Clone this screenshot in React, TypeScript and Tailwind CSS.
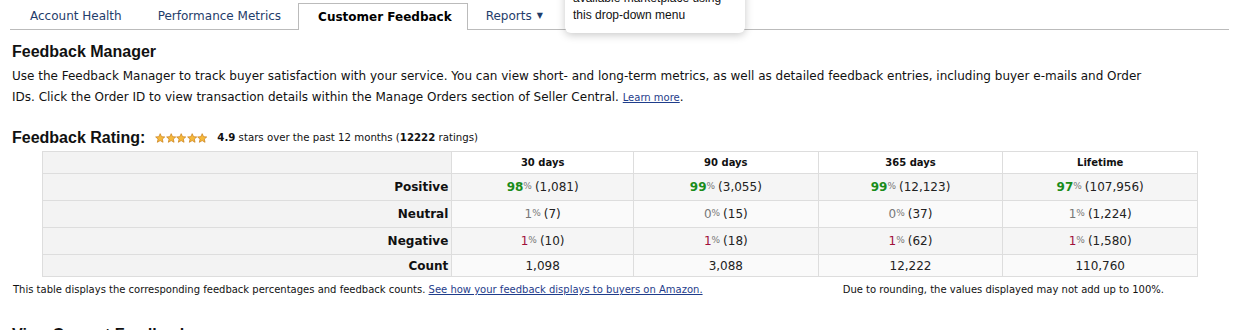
import React from 'react'

const verdana = { fontFamily: '"DejaVu Sans", Verdana, sans-serif' }
const arial = { fontFamily: '"Liberation Sans", Arial, sans-serif' }

function Star() {
  return (
    <svg width="10.4" height="10.4" viewBox="0 0 24 24">
      <path
        d="M12 1.5l3.1 6.9 7.4.7-5.6 5 1.7 7.4L12 17.6l-6.6 3.9 1.7-7.4-5.6-5 7.4-.7z"
        fill="#f6b93b"
        stroke="#c77a12"
        strokeWidth="1.6"
        strokeLinejoin="round"
      />
    </svg>
  )
}

type Cell = { pct: string; n: string }

const cols = ['30 days', '90 days', '365 days', 'Lifetime']
const widths = ['w-[182px]', 'w-[185px]', 'w-[185px]', 'w-[195px]']

const positive: Cell[] = [
  { pct: '98', n: '(1,081)' },
  { pct: '99', n: '(3,055)' },
  { pct: '99', n: '(12,123)' },
  { pct: '97', n: '(107,956)' },
]
const neutral: Cell[] = [
  { pct: '1', n: '(7)' },
  { pct: '0', n: '(15)' },
  { pct: '0', n: '(37)' },
  { pct: '1', n: '(1,224)' },
]
const negative: Cell[] = [
  { pct: '1', n: '(10)' },
  { pct: '1', n: '(18)' },
  { pct: '1', n: '(62)' },
  { pct: '1', n: '(1,580)' },
]
const counts = ['1,098', '3,088', '12,222', '110,760']

function Row({
  label,
  cells,
  pctClass,
  bg,
}: {
  label: string
  cells: Cell[]
  pctClass: string
  bg: string
}) {
  return (
    <div className="flex h-[27px] border-t border-[#dddddd]">
      <div className="w-[409px] bg-[#f3f3f3] flex items-center justify-end pr-[3px] font-bold text-[12px] text-[#111]">
        {label}
      </div>
      {cells.map((c, i) => (
        <div
          key={i}
          className={`${widths[i]} ${bg} border-l border-[#dddddd] flex items-center justify-center text-[12px] text-[#222]`}
        >
          <span className={pctClass}>{c.pct}</span>
          <span className="text-[9px] text-[#777] mr-[3px]">%</span>
          <span>{c.n}</span>
        </div>
      ))}
    </div>
  )
}

export default function App() {
  return (
    <div className="relative w-[1239px] h-[330px] overflow-hidden bg-white text-[#111]" style={verdana}>
      {/* tab bar */}
      <div className="flex items-end h-[30px] mx-[10px] border-b border-[#bbbbbb] text-[12px]">
        <div className="pl-[20px] pr-[18px] h-[26px] flex items-center text-[#1f3d6b]">Account Health</div>
        <div className="pl-[18px] pr-[17px] h-[26px] flex items-center text-[#1f3d6b]">Performance Metrics</div>
        <div className="pl-[19px] pr-[15px] h-[27px] -mb-px flex items-center bg-white border border-b-0 border-[#bbbbbb] font-bold text-black">
          Customer Feedback
        </div>
        <div className="pl-[18px] h-[26px] flex items-center gap-[5px] text-[#1f3d6b]">
          Reports <span className="text-[8px]">▼</span>
        </div>
      </div>

      {/* popover from dropdown */}
      <div
        className="absolute left-[565px] top-[-13px] w-[180px] h-[46px] bg-white rounded-b-[6px] shadow-[0_2px_8px_rgba(0,0,0,0.22)] px-[8px] text-[12px] leading-[18px] text-[#111]"
        style={arial}
      >
        <div className="mt-[2px]">available marketplace using</div>
        <div className="mt-[-1px]">this drop-down menu</div>
      </div>

      <div className="px-[12px]">
        <h2 className="mt-[12px] text-[16px] font-bold leading-[20px] text-[#111]" style={arial}>
          Feedback Manager
        </h2>
        <p className="mt-[4px] text-[12px] leading-[21px] text-[#111]">
          Use the Feedback Manager to track buyer satisfaction with your service. You can view short- and long-term
          metrics, as well as detailed feedback entries, including buyer e-mails and Order
          <br />
          IDs. Click the Order ID to view transaction details within the Manage Orders section of Seller Central.{' '}
          <a className="text-[10px] text-[#1f3d8b] underline">Learn more</a>.
        </p>

        <div className="mt-[20px] flex items-center">
          <span className="text-[16px] font-bold leading-[20px]" style={arial}>
            Feedback Rating:
          </span>
          <span className="ml-[10px] flex">
            <Star />
            <Star />
            <Star />
            <Star />
            <Star />
          </span>
          <span className="ml-[10px] text-[10.2px] text-[#111]">
            <b>4.9</b> stars over the past 12 months (<b>12222</b> ratings)
          </span>
        </div>

        {/* table */}
        <div className="mt-[3px] ml-[30px] w-[1156px] border border-[#dddddd] border-t-0">
          <div className="flex h-[22px] border-t border-[#dddddd]">
            <div className="w-[409px] bg-[#f3f3f3]" />
            {cols.map((c, i) => (
              <div
                key={c}
                className={`${widths[i]} border-l border-[#dddddd] bg-white flex items-center justify-center font-bold text-[10px]`}
              >
                {c}
              </div>
            ))}
          </div>
          <Row label="Positive" cells={positive} pctClass="font-bold text-[#1a8c1a]" bg="bg-[#f5f5f5]" />
          <Row label="Neutral" cells={neutral} pctClass="text-[#777777]" bg="bg-[#fafafa]" />
          <Row label="Negative" cells={negative} pctClass="text-[#a0103a]" bg="bg-[#f5f5f5]" />
          <div className="flex h-[22px] border-t border-[#dddddd]">
            <div className="w-[409px] bg-[#f3f3f3] flex items-center justify-end pr-[3px] font-bold text-[12px]">
              Count
            </div>
            {counts.map((c, i) => (
              <div
                key={c}
                className={`${widths[i]} bg-[#fafafa] border-l border-[#dddddd] flex items-center justify-center text-[12px] text-[#222]`}
              >
                {c}
              </div>
            ))}
          </div>
        </div>

        <div className="mt-[5px] ml-[1px] w-[1151px] flex justify-between text-[10px] text-[#111]">
          <span>
            This table displays the corresponding feedback percentages and feedback counts.{' '}
            <a className="text-[#1f3d8b] underline">See how your feedback displays to buyers on Amazon.</a>
          </span>
          <span>Due to rounding, the values displayed may not add up to 100%.</span>
        </div>

        <h2 className="mt-[28px] text-[16px] font-bold leading-[20px]" style={arial}>
          View Current Feedback
        </h2>
      </div>
    </div>
  )
}
